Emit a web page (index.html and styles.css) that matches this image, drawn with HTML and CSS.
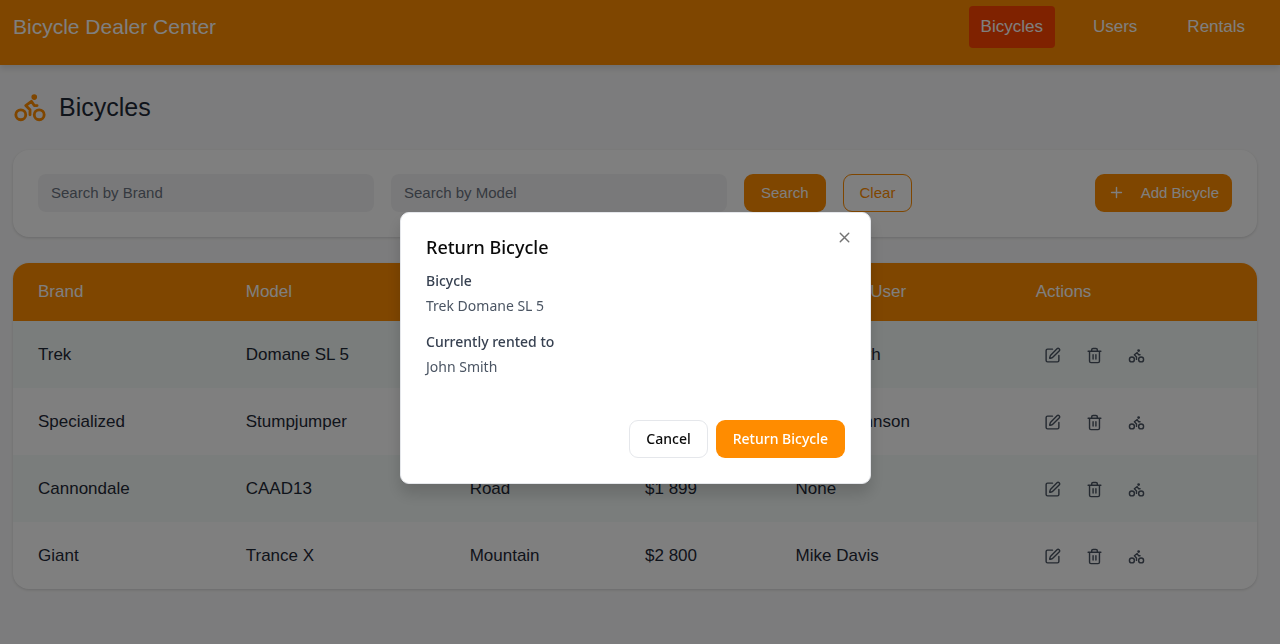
FILE: index.html
```html
<!DOCTYPE html>
<html lang="en">
<head>
<meta charset="utf-8">
<title>Bicycle Dealer Center</title>
<link rel="stylesheet" href="styles.css">
</head>
<body>
<svg class="sprite" aria-hidden="true">
  <symbol id="bike" viewBox="0 0 24 24"><circle cx="18.5" cy="17.5" r="3.5"/><circle cx="5.5" cy="17.5" r="3.5"/><circle cx="15" cy="5" r="1"/><path d="M12 17.5V14l-3-3 4-3 2 3h2"/></symbol>
  <symbol id="edit" viewBox="0 0 24 24"><path d="M12 3H5a2 2 0 0 0-2 2v14a2 2 0 0 0 2 2h14a2 2 0 0 0 2-2v-7"/><path d="M18.375 2.625a1 1 0 0 1 3 3l-9.013 9.014a2 2 0 0 1-.853.505l-2.873.84a.5.5 0 0 1-.62-.62l.84-2.873a2 2 0 0 1 .506-.852z"/></symbol>
  <symbol id="trash" viewBox="0 0 24 24"><path d="M3 6h18M19 6v14c0 1-1 2-2 2H7c-1 0-2-1-2-2V6M8 6V4c0-1 1-2 2-2h4c1 0 2 1 2 2v2M10 11v6M14 11v6"/></symbol>
  <symbol id="plus" viewBox="0 0 24 24"><path d="M5 12h14M12 5v14"/></symbol>
  <symbol id="close" viewBox="0 0 24 24"><path d="M18 6 6 18M6 6l12 12"/></symbol>
</svg>

<header class="topbar">
  <span class="brand">Bicycle Dealer Center</span>
  <nav class="nav">
    <a class="nav-link active" href="#bicycles">Bicycles</a>
    <a class="nav-link" href="#users">Users</a>
    <a class="nav-link" href="#rentals">Rentals</a>
  </nav>
</header>

<main class="page">
  <h1 class="page-title"><svg class="title-icon"><use href="#bike"/></svg>Bicycles</h1>

  <form class="card filters">
    <input class="field" type="text" placeholder="Search by Brand" aria-label="Search by Brand">
    <input class="field" type="text" placeholder="Search by Model" aria-label="Search by Model">
    <button class="btn primary" type="button">Search</button>
    <button class="btn outline" type="button">Clear</button>
    <button class="btn primary add" type="button"><svg class="icon"><use href="#plus"/></svg>Add Bicycle</button>
  </form>

  <div class="card table-card">
    <table class="table">
      <colgroup><col class="c-brand"><col class="c-model"><col class="c-type"><col class="c-price"><col class="c-user"><col></colgroup>
      <thead>
        <tr><th>Brand</th><th>Model</th><th>Type</th><th>Price</th><th>Assigned User</th><th>Actions</th></tr>
      </thead>
      <tbody>
        <tr><td>Trek</td><td>Domane SL 5</td><td>Road</td><td>$3 499</td><td>John Smith</td>
          <td><div class="actions"><button aria-label="Edit"><svg class="icon"><use href="#edit"/></svg></button><button aria-label="Delete"><svg class="icon"><use href="#trash"/></svg></button><button aria-label="Return"><svg class="icon"><use href="#bike"/></svg></button></div></td></tr>
        <tr><td>Specialized</td><td>Stumpjumper</td><td>Mountain</td><td>$4 200</td><td>Sarah Johnson</td>
          <td><div class="actions"><button aria-label="Edit"><svg class="icon"><use href="#edit"/></svg></button><button aria-label="Delete"><svg class="icon"><use href="#trash"/></svg></button><button aria-label="Return"><svg class="icon"><use href="#bike"/></svg></button></div></td></tr>
        <tr><td>Cannondale</td><td>CAAD13</td><td>Road</td><td>$1 899</td><td>None</td>
          <td><div class="actions"><button aria-label="Edit"><svg class="icon"><use href="#edit"/></svg></button><button aria-label="Delete"><svg class="icon"><use href="#trash"/></svg></button><button aria-label="Rent"><svg class="icon"><use href="#bike"/></svg></button></div></td></tr>
        <tr><td>Giant</td><td>Trance X</td><td>Mountain</td><td>$2 800</td><td>Mike Davis</td>
          <td><div class="actions"><button aria-label="Edit"><svg class="icon"><use href="#edit"/></svg></button><button aria-label="Delete"><svg class="icon"><use href="#trash"/></svg></button><button aria-label="Return"><svg class="icon"><use href="#bike"/></svg></button></div></td></tr>
      </tbody>
    </table>
  </div>
</main>

<div class="overlay">
  <section class="dialog" role="dialog" aria-modal="true" aria-labelledby="dialog-title">
    <h2 class="dialog-title" id="dialog-title">Return Bicycle</h2>
    <dl class="details">
      <dt>Bicycle</dt>
      <dd>Trek Domane SL 5</dd>
      <dt>Currently rented to</dt>
      <dd>John Smith</dd>
    </dl>
    <div class="dialog-actions">
      <button class="btn plain" type="button">Cancel</button>
      <button class="btn confirm" type="button">Return Bicycle</button>
    </div>
    <button class="close" type="button" aria-label="Close"><svg class="icon"><use href="#close"/></svg></button>
  </section>
</div>
</body>
</html>
```
FILE: styles.css
```css
* { box-sizing: border-box; }

:root {
  --orange: #ff8c00;
  --ink: #1f2937;
  --muted: #4b5563;
}

body {
  margin: 0;
  min-height: 100vh;
  background: #f9f9fa;
  color: var(--ink);
  font: 17px/25px "Liberation Sans", Arial, sans-serif;
}

button, input { font: inherit; }
button { cursor: pointer; }

svg {
  fill: none;
  stroke: currentColor;
  stroke-width: 2;
  stroke-linecap: round;
  stroke-linejoin: round;
}

.sprite { display: none; }
.icon { width: 17px; height: 17px; flex: none; }

.topbar {
  display: flex;
  justify-content: space-between;
  align-items: flex-start;
  padding: 6px 23px 17px 13px;
  background: var(--orange);
  color: #fff;
  box-shadow: 0 4px 6px rgba(0, 0, 0, 0.1);
}

.brand { font-size: 21px; line-height: 42px; }
.nav { display: flex; gap: 26px; }

.nav-link {
  padding: 8px 12px;
  border-radius: 4px;
  color: #fff;
  line-height: 26px;
  text-decoration: none;
}

.nav-link.active { background: #ff4500; }

.page { padding: 25px 23px 25px 13px; }

.page-title {
  display: flex;
  align-items: center;
  gap: 12px;
  margin: 0 0 26px;
  font-size: 25px;
  font-weight: 400;
  line-height: 34px;
}

.title-icon { width: 34px; height: 34px; color: var(--orange); }

.card {
  background: #fff;
  border-radius: 16px;
  box-shadow: 0 1px 3px rgba(0, 0, 0, 0.15);
}

.filters {
  display: flex;
  gap: 17px;
  margin-bottom: 26px;
  padding: 24px 25px 25px;
  font-size: 15px;
}

.field {
  flex: 0 1 336px;
  min-width: 0;
  height: 38px;
  padding: 0 13px 2px;
  border: 0;
  border-radius: 8px;
  background: #f3f3f4;
}

.field::placeholder { color: #6b7280; opacity: 1; }

.btn {
  display: flex;
  align-items: center;
  height: 38px;
  padding: 0 16px;
  border: 1px solid transparent;
  border-radius: 9px;
  white-space: nowrap;
}

.filters .btn { padding: 0 16px 2px; }
.filters .add { gap: 16px; margin-left: auto; padding: 0 12px 2px; }
.primary { background: var(--orange); color: #fff; }
.outline { border-color: var(--orange); background: #fff; color: var(--orange); }

.table-card { overflow: hidden; }

.table {
  width: 100%;
  border-collapse: collapse;
  table-layout: fixed;
}

.c-brand { width: 16.7%; }
.c-model { width: 18%; }
.c-type { width: 14.1%; }
.c-price { width: 12.1%; }
.c-user { width: 19.3%; }

.table th, .table td { padding: 0 25px; text-align: left; }

.table th {
  height: 58px;
  padding-bottom: 2px;
  background: var(--orange);
  color: #fff;
  font-weight: 400;
}

.table td { height: 67px; }
.table tbody tr:nth-child(odd) { background: #f5fbf8; }

.actions { display: flex; gap: 8px; }

.actions button {
  display: grid;
  place-items: center;
  width: 34px;
  height: 34px;
  padding: 2px 0 0;
  border: 0;
  background: none;
  color: var(--muted);
}

.overlay {
  position: fixed;
  inset: 0;
  display: flex;
  justify-content: center;
  align-items: flex-start;
  padding: 212px 9px 0 0;
  background: rgba(0, 0, 0, 0.5);
}

.dialog {
  position: relative;
  width: 471px;
  padding: 22px 25px 25px;
  border: 1px solid #e5e7eb;
  border-radius: 9px;
  background: #fff;
  box-shadow: 0 10px 15px rgba(0, 0, 0, 0.15);
  font: 14px/26px "Noto Sans", "Open Sans", sans-serif;
}

.dialog-title {
  margin: 0 0 8px;
  color: #0a0a0a;
  font-size: 18px;
  font-weight: 500;
  line-height: 25px;
}

.details { margin: 0 0 41px; }
.details dt { color: #374151; font-weight: 500; }
.details dd { margin: 0 0 11px; color: var(--muted); line-height: 24px; }

.dialog-actions { display: flex; justify-content: flex-end; gap: 8px; font-weight: 500; }
.plain { border-color: #e5e7eb; background: #fff; color: #0a0a0a; }
.confirm { background: var(--orange); color: #fff; }

.close {
  position: absolute;
  top: 16px;
  right: 17px;
  display: grid;
  padding: 0;
  border: 0;
  background: none;
  color: #737373;
}
```
